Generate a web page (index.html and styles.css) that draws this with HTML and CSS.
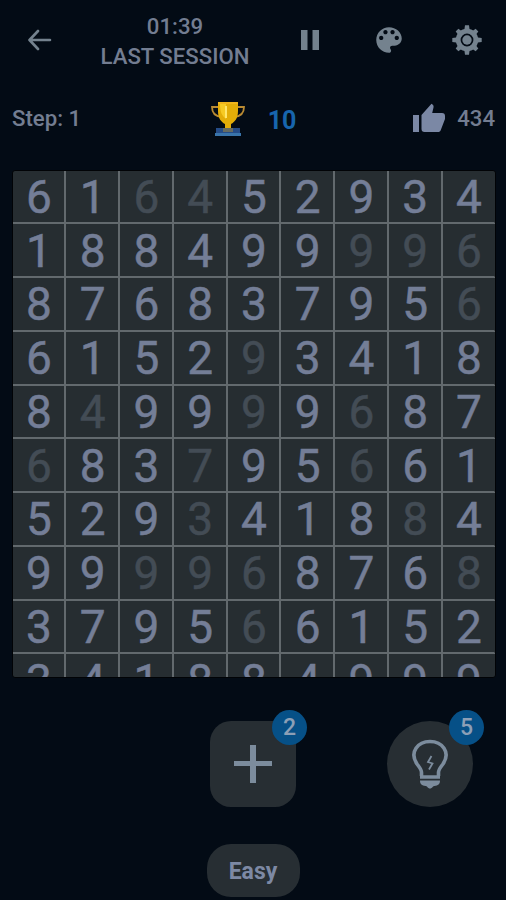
FILE: index.html
```html
<!DOCTYPE html>
<html lang="en">

<head>
    <meta charset="UTF-8">
    <meta name="viewport" content="width=device-width, initial-scale=1.0">
    <title>Number Match</title>
    <link rel="stylesheet" href="styles.css">
</head>

<body>
    <header class="toolbar">
        <button type="button" aria-label="Back">
            <svg width="24" height="22" viewBox="0 0 24 22" fill="none" stroke="currentColor" stroke-width="2.6" stroke-linecap="round" stroke-linejoin="round">
                <path d="M22 11H2M10 2 1.5 11 10 20" />
            </svg>
        </button>
        <div class="session">
            <div>01:39</div>
            <div>LAST SESSION</div>
        </div>
        <button type="button" aria-label="Pause">
            <svg width="18" height="20" viewBox="0 0 18 20" fill="currentColor">
                <path d="M0 0h6.5v20H0zM11.5 0H18v20h-6.500z" />
            </svg>
        </button>
        <button type="button" aria-label="Theme">
            <svg width="34" height="34" viewBox="0 0 24 24" fill="currentColor">
                <path d="M12 3c-4.970 0-9 4.030-9 9s4.030 9 9 9c.83 0 1.500-.67 1.500-1.500 0-.39-.15-.74-.39-1.010-.23-.26-.38-.61-.38-.99 0-.83.67-1.500 1.500-1.500H16c2.760 0 5-2.240 5-5 0-4.420-4.030-8-9-8zm-5.500 9c-.83 0-1.500-.67-1.500-1.500S5.670 9 6.500 9 8 9.670 8 10.500 7.330 12 6.500 12zm3-4C8.670 8 8 7.330 8 6.500S8.670 5 9.500 5s1.500.67 1.500 1.500S10.330 8 9.500 8zm5 0c-.83 0-1.500-.67-1.500-1.500S13.670 5 14.500 5s1.500.67 1.500 1.500S15.330 8 14.500 8zm3 4c-.83 0-1.500-.67-1.500-1.500S16.670 9 17.500 9s1.500.67 1.500 1.500-.67 1.500-1.500 1.500z" />
            </svg>
        </button>
        <button type="button" aria-label="Settings">
            <svg width="30" height="30" viewBox="-15 -15 30 30" fill="currentColor">
                <circle r="8.800" fill="none" stroke="currentColor" stroke-width="4.800" />
                <circle r="4.700" />
                <g id="teeth">
                    <path d="M-2.800-9-2-14.700H2L2.800-9zM-2.800 9-2 14.700H2L2.800 9zM-9-2.800-14.700-2V2L-9 2.800zM9-2.800 14.700-2V2L9 2.800z" />
                </g>
                <use href="#teeth" transform="rotate(45) scale(.96)" />
            </svg>
        </button>
    </header>

    <section class="stats">
        <div class="step">Step: 1</div>
        <div class="record">
            <svg width="34" height="36" viewBox="0 0 34 36">
                <path d="M8 6H1c0 6 3 9.500 10 10M26 6h7c0 6-3 9.500-10 10" fill="none" stroke="#b98a32" stroke-width="1.800" />
                <path d="M7 1h20v9c0 7-3 11-7 13v4h-6v-4C10 21 7 17 7 10z" fill="#e3ad08" />
                <path d="M9 3h6v15C11 15 9 11 9 3z" fill="#f6ca24" />
                <path d="M14 5h2v12h-2z" fill="#ffe66b" />
                <path d="M7 1h20v2H7z" fill="#f0b51c" />
                <path d="M5 27h24v5H5z" fill="#254c87" />
                <path d="M12 27h10v4H12z" fill="#666b61" />
                <path d="M4 32h26v3H4z" fill="#3974aa" />
            </svg>
            <span>10</span>
        </div>
        <div class="score">
            <svg width="32" height="30" viewBox="0 0 32 30" fill="currentColor">
                <path d="M0 12h6v17H0zM8.500 12 18.500.8c1.600.7 2.400 2 2 3.800L19.200 10H29c2 0 3 1.300 3 3v3l-4.200 11c-.6 1.400-1.300 2-3 2H11.500c-1.900 0-3-1-3-3z" />
            </svg>
            <span>434</span>
        </div>
    </section>

    <main class="board">
        <div class="grid">
            <span>6</span><span>1</span><span class="used">6</span><span class="used">4</span><span>5</span><span>2</span><span>9</span><span>3</span><span>4</span>
            <span>1</span><span>8</span><span>8</span><span>4</span><span>9</span><span>9</span><span class="used">9</span><span class="used">9</span><span class="used">6</span>
            <span>8</span><span>7</span><span>6</span><span>8</span><span>3</span><span>7</span><span>9</span><span>5</span><span class="used">6</span>
            <span>6</span><span>1</span><span>5</span><span>2</span><span class="used">9</span><span>3</span><span>4</span><span>1</span><span>8</span>
            <span>8</span><span class="used">4</span><span>9</span><span>9</span><span class="used">9</span><span>9</span><span class="used">6</span><span>8</span><span>7</span>
            <span class="used">6</span><span>8</span><span>3</span><span class="used">7</span><span>9</span><span>5</span><span class="used">6</span><span>6</span><span>1</span>
            <span>5</span><span>2</span><span>9</span><span class="used">3</span><span>4</span><span>1</span><span>8</span><span class="used">8</span><span>4</span>
            <span>9</span><span>9</span><span class="used">9</span><span class="used">9</span><span class="used">6</span><span>8</span><span>7</span><span>6</span><span class="used">8</span>
            <span>3</span><span>7</span><span>9</span><span>5</span><span class="used">6</span><span>6</span><span>1</span><span>5</span><span>2</span>
            <span>3</span><span>4</span><span>1</span><span>8</span><span>8</span><span>4</span><span>9</span><span>9</span><span>9</span>
        </div>
    </main>

    <section class="actions">
        <button type="button" class="action add" aria-label="Add numbers">
            <svg width="38" height="38" viewBox="0 0 38 38" fill="currentColor">
                <path d="M16 0h6v16h16v5H22v17h-6V21H0v-5h16z" />
            </svg>
            <span class="badge">2</span>
        </button>
        <button type="button" class="action hint" aria-label="Hint">
            <svg width="38" height="50" viewBox="0 0 38 50" fill="none" stroke="currentColor">
                <path d="M10.500 37v-3.500c0-3-2-5-4.500-8.500C-2 13 7 2.500 19 2.500S40 13 32 25c-2.500 3.500-4.500 5.500-4.500 8.500V37" stroke-width="3.600" />
                <path d="M20.500 17 17 23l4.500 1.500-3.500 6" stroke-width="1.800" />
                <path d="M9 38h20" stroke-width="3.500" />
                <path d="M9 41.500h20c0 4-2 5-5.500 5.500-2 0-2 2.500-4.500 2.500s-2.500-2.500-4.500-2.500c-3.500-.5-5.500-1.500-5.500-5.500z" fill="currentColor" stroke="none" />
            </svg>
            <span class="badge">5</span>
        </button>
    </section>

    <footer class="footer">
        <button type="button" class="level">Easy</button>
    </footer>
</body>

</html>
```
FILE: styles.css
```css
* {
    box-sizing: border-box;
}

body {
    font-family: Roboto, "Liberation Sans", sans-serif;
    font-weight: 500;
    background-color: #030b15;
    color: #737d91;
    margin: 0;
    height: 900px;
    overflow: hidden;
}

button {
    display: flex;
    align-items: center;
    justify-content: center;
    padding: 0;
    border: none;
    background: none;
    color: #74828e;
    font: inherit;
    cursor: pointer;
}

svg {
    display: block;
    flex: none;
}

.toolbar {
    display: grid;
    grid-template-columns: 80px 190px 80px 77px 80px;
    height: 80px;
}

.session {
    padding-top: 11px;
    font-size: 22.2px;
    line-height: 30px;
    text-align: center;
    white-space: nowrap;
}

.stats {
    display: grid;
    grid-template-columns: 1fr 1fr 1fr;
    align-items: center;
    height: 76px;
    padding: 0 11px 0 12px;
    font-size: 22.2px;
}

.record {
    display: flex;
    align-items: center;
    justify-content: center;
    gap: 23px;
    padding-top: 1px;
    color: #1765ad;
    font-size: 25px;
    font-weight: 700;
}

.record span {
    padding-top: 3px;
}

.score {
    display: flex;
    align-items: center;
    justify-content: flex-end;
    gap: 12px;
}

.score svg {
    color: #7b88a5;
}

.board {
    width: 484px;
    height: 508px;
    margin: 14px 0 0 12px;
    border: 1px solid #010306;
    border-radius: 3px;
    background-color: #262d31;
    overflow: hidden;
}

.grid {
    display: grid;
    grid-template-columns: repeat(9, 53.75px);
    grid-auto-rows: 53.75px;
    margin: -0.5px 0 0 -0.5px;
}

.grid span {
    display: flex;
    align-items: center;
    justify-content: center;
    padding: 1px 0 0 1px;
    border-right: 2px solid #62696d;
    border-bottom: 2px solid #62696d;
    color: #747e97;
    font-size: 46px;
    font-weight: 400;
    line-height: 1;
    -webkit-text-stroke: 0.5px currentColor;
}

.grid span:nth-child(9n) {
    border-right-color: transparent;
}

.grid .used {
    color: #434c55;
}

.actions {
    display: flex;
    gap: 91px;
    padding: 43px 0 0 210px;
}

.action {
    position: relative;
    width: 86px;
    height: 86px;
    background-color: #272e33;
    color: #7c8c9d;
}

.add {
    border-radius: 21px;
}

.hint {
    border-radius: 50%;
}

.badge {
    position: absolute;
    top: -11px;
    right: -11px;
    width: 35px;
    height: 35px;
    border-radius: 50%;
    background-color: #065087;
    color: #8c9fb6;
    font-size: 23px;
    line-height: 36px;
    text-align: center;
}

.footer {
    display: flex;
    justify-content: center;
    padding-top: 37px;
}

.level {
    width: 93px;
    height: 53px;
    padding-top: 2px;
    border-radius: 24px;
    background-color: #272e33;
    color: #7d89a4;
    font-size: 23px;
    font-weight: 700;
}
```
